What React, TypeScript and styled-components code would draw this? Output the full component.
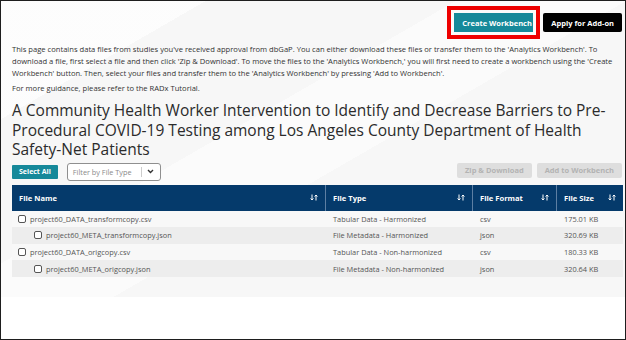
import React from "react";
import styled, { createGlobalStyle } from "styled-components";

const GlobalStyle = createGlobalStyle`
  html, body { margin: 0; padding: 0; background: #fff; }
  body { font-family: "Open Sans", "Liberation Sans", sans-serif; }
  * { box-sizing: border-box; }
`;

const Frame = styled.div`
  width: 626px;
  height: 340px;
  border: 1px solid #1e1e1e;
  background: #fff;
  overflow: hidden;
`;

const Page = styled.div`
  background-color: #f7f7f7;
  background-image:
    linear-gradient(150deg, rgba(255,255,255,0.7) 0 18%, transparent 18% 40%, rgba(255,255,255,0.5) 40% 55%, transparent 55%);
  padding: 12px 3px 10px 10px;
  display: flex;
  flex-direction: column;
`;

const TopBar = styled.div`
  display: flex;
  justify-content: flex-end;
  gap: 10px;
  height: 19px;
`;

const ActionButton = styled.button<{ $variant: "teal" | "black" | "disabled" }>`
  font-family: "Open Sans", "Liberation Sans", sans-serif;
  font-weight: 700;
  font-size: 7.5px;
  border: none;
  border-radius: 2px;
  padding: 0 8px;
  height: ${(p) => (p.$variant === "disabled" ? "15px" : "19px")};
  color: ${(p) => (p.$variant === "disabled" ? "#b3b3b3" : "#fff")};
  background: ${(p) =>
    p.$variant === "teal" ? "#16899a" : p.$variant === "black" ? "#000" : "#dedede"};
  white-space: nowrap;
  cursor: pointer;
`;

const Highlighted = styled(ActionButton)`
  width: 79px;
  border-radius: 0;
  outline: 4px solid #ee0000;
  outline-offset: 3px;
`;

const Intro = styled.p`
  margin: 11px 0 0 1px;
  font-size: 7.6px;
  line-height: 12px;
  color: #333;
`;

const Guidance = styled(Intro)`
  margin-top: 3px;
`;

const Title = styled.h2`
  margin: 7px 0 0 1px;
  font-size: 15.5px;
  font-weight: 400;
  line-height: 19.5px;
  color: #2b2b2b;
`;

const Toolbar = styled.div`
  display: flex;
  align-items: center;
  justify-content: space-between;
  margin: 3px 0 0 1px;
  height: 18px;
`;

const Group = styled.div`
  display: flex;
  align-items: center;
  gap: 9px;
`;

const RightGroup = styled(Group)`
  gap: 5px;
  align-self: flex-start;
`;

const SmallTeal = styled(ActionButton)`
  height: 14px;
  padding: 0 7px;
  font-size: 7px;
  border-radius: 1px;
`;

const Select = styled.div`
  width: 94px;
  height: 18px;
  background: #fff;
  border: 1px solid #8f8f8f;
  border-radius: 3px;
  display: flex;
  align-items: center;
  padding-left: 5px;
  font-size: 7.3px;
  color: #8a8a8a;
`;

const SelectText = styled.span`
  flex: 1;
`;

const SelectDivider = styled.span`
  width: 1px;
  height: 10px;
  background: #ccc;
`;

const Chevron = styled.span`
  width: 18px;
  display: flex;
  justify-content: center;
  align-items: center;
`;

const Table = styled.div`
  margin: 4px 0 0 1px;
  width: 611px;
  display: grid;
  grid-template-columns: 314px 147px 84px 66px;
`;

const HeadCell = styled.div<{ $last?: boolean }>`
  height: 26px;
  background: #053a6b;
  color: #fff;
  font-weight: 700;
  font-size: 7.6px;
  display: flex;
  align-items: center;
  justify-content: space-between;
  padding: 0 7px 0 7px;
  border-right: ${(p) => (p.$last ? "none" : "1px solid #5d7fa3")};
`;

const Cell = styled.div<{ $shade: boolean; $indent?: number }>`
  height: 16.6px;
  background: ${(p) => (p.$shade ? "#ededed" : "#f8f8f8")};
  color: #555;
  font-size: 7.4px;
  display: flex;
  align-items: center;
  padding-left: ${(p) => 7 + (p.$indent ?? 0)}px;
  white-space: nowrap;
`;

const Check = styled.span`
  width: 8px;
  height: 8px;
  border: 1px solid #555;
  border-radius: 2px;
  background: #fff;
  margin-right: 4px;
  flex: none;
`;

const Footer = styled.div`
  height: 10px;
`;

const SortIcon = () => (
  <svg width="8" height="7" viewBox="0 0 8 7" aria-hidden>
    <path d="M2 0.5 V6 M0.6 4.5 L2 6 L3.4 4.5" stroke="#fff" strokeWidth="1" fill="none" />
    <path d="M6 6.5 V1 M4.6 2.5 L6 1 L7.4 2.5" stroke="#fff" strokeWidth="1" fill="none" />
  </svg>
);

const rows = [
  { name: "project60_DATA_transformcopy.csv", indent: 0, type: "Tabular Data - Harmonized", fmt: "csv", size: "175.01 KB" },
  { name: "project60_META_transformcopy.json", indent: 16, type: "File Metadata - Harmonized", fmt: "json", size: "320.69 KB" },
  { name: "project60_DATA_origcopy.csv", indent: 0, type: "Tabular Data - Non-harmonized", fmt: "csv", size: "180.33 KB" },
  { name: "project60_META_origcopy.json", indent: 16, type: "File Metadata - Non-harmonized", fmt: "json", size: "320.64 KB" },
];

const headers = ["File Name", "File Type", "File Format", "File Size"];

export default function App() {
  return (
    <>
      <GlobalStyle />
      <Frame>
        <Page>
          <TopBar>
            <Highlighted $variant="teal">Create Workbench</Highlighted>
            <ActionButton $variant="black">Apply for Add-on</ActionButton>
          </TopBar>
          <Intro>
            This page contains data files from studies you've received approval from dbGaP. You can either download these files or transfer them to the 'Analytics Workbench'. To download a file, first select a file and then click 'Zip &amp; Download'. To move the files to the 'Analytics Workbench,' you will first need to create a workbench using the 'Create Workbench' button. Then, select your files and transfer them to the 'Analytics Workbench' by pressing 'Add to Workbench'.
          </Intro>
          <Guidance>For more guidance, please refer to the RADx Tutorial.</Guidance>
          <Title>
            A Community Health Worker Intervention to Identify and Decrease Barriers to Pre-Procedural COVID-19 Testing among Los Angeles County Department of Health Safety-Net Patients
          </Title>
          <Toolbar>
            <Group>
              <SmallTeal $variant="teal">Select All</SmallTeal>
              <Select>
                <SelectText>Filter by File Type</SelectText>
                <SelectDivider />
                <Chevron>
                  <svg width="7" height="5" viewBox="0 0 7 5" aria-hidden>
                    <path d="M1 1 L3.5 3.5 L6 1" stroke="#333" strokeWidth="1.4" fill="none" />
                  </svg>
                </Chevron>
              </Select>
            </Group>
            <RightGroup>
              <ActionButton $variant="disabled">Zip &amp; Download</ActionButton>
              <ActionButton $variant="disabled">Add to Workbench</ActionButton>
            </RightGroup>
          </Toolbar>
          <Table>
            {headers.map((h, i) => (
              <HeadCell key={h} $last={i === headers.length - 1}>
                <span>{h}</span>
                <SortIcon />
              </HeadCell>
            ))}
            {rows.map((r, i) => (
              <React.Fragment key={r.name}>
                <Cell $shade={i % 2 === 1} $indent={r.indent - 1}>
                  <Check />
                  {r.name}
                </Cell>
                <Cell $shade={i % 2 === 1}>{r.type}</Cell>
                <Cell $shade={i % 2 === 1}>{r.fmt}</Cell>
                <Cell $shade={i % 2 === 1}>{r.size}</Cell>
              </React.Fragment>
            ))}
          </Table>
          <Footer />
        </Page>
      </Frame>
    </>
  );
}
